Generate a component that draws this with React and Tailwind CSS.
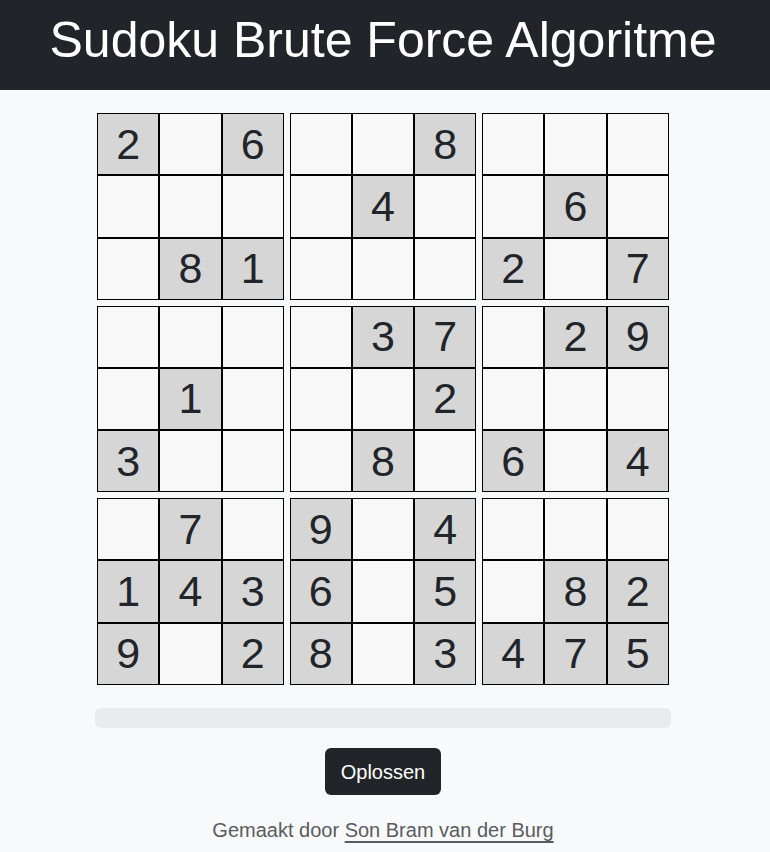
const puzzle = [
  [2, 0, 6, 0, 0, 8, 0, 0, 0],
  [0, 0, 0, 0, 4, 0, 0, 6, 0],
  [0, 8, 1, 0, 0, 0, 2, 0, 7],
  [0, 0, 0, 0, 3, 7, 0, 2, 9],
  [0, 1, 0, 0, 0, 2, 0, 0, 0],
  [3, 0, 0, 0, 8, 0, 6, 0, 4],
  [0, 7, 0, 9, 0, 4, 0, 0, 0],
  [1, 4, 3, 6, 0, 5, 0, 8, 2],
  [9, 0, 2, 8, 0, 3, 4, 7, 5],
];

function Block({ br, bc }) {
  const cells = [];
  for (let r = 0; r < 3; r++) {
    for (let c = 0; c < 3; c++) {
      const v = puzzle[br * 3 + r][bc * 3 + c];
      cells.push(
        <div
          key={`${r}-${c}`}
          className={`flex items-center justify-center border border-black text-[43px] leading-none text-[#212529] ${
            v ? 'bg-[#d6d6d6]' : 'bg-[#f8f8f8]'
          }`}
        >
          {v || ''}
        </div>
      );
    }
  }
  return <div className="grid grid-cols-3 grid-rows-3 w-[187px] h-[187px]">{cells}</div>;
}

export default function App() {
  return (
    <div className="min-h-screen bg-[#f8f9fa] font-['Liberation_Sans',Arial,sans-serif]">
      <header className="bg-[#212529] h-[90px]">
        <div className="w-[766px] pt-[10px] text-center">
          <h1 className="text-white text-[50px] leading-[60px]">Sudoku Brute Force Algoritme</h1>
        </div>
      </header>
      <div className="w-[766px] flex flex-col items-center pt-[23px]">
        <div className="grid grid-cols-3 gap-[5.5px] w-[572px]">
          {[0, 1, 2].map((br) =>
            [0, 1, 2].map((bc) => <Block key={`${br}${bc}`} br={br} bc={bc} />)
          )}
        </div>
        <div className="mt-[23px] w-[576px] h-[20px] rounded-md bg-[#e9ecef]"></div>
        <button className="mt-[20px] bg-[#212529] text-white text-[20px] leading-[30px] w-[116px] h-[47px] rounded-md">
          Oplossen
        </button>
        <p className="mt-[20px] text-[20px] leading-[30px] text-[#595c5f]">
          Gemaakt door{' '}
          <a href="#" className="underline underline-offset-4 text-[#595c5f]">
            Son Bram van der Burg
          </a>
        </p>
      </div>
    </div>
  );
}
